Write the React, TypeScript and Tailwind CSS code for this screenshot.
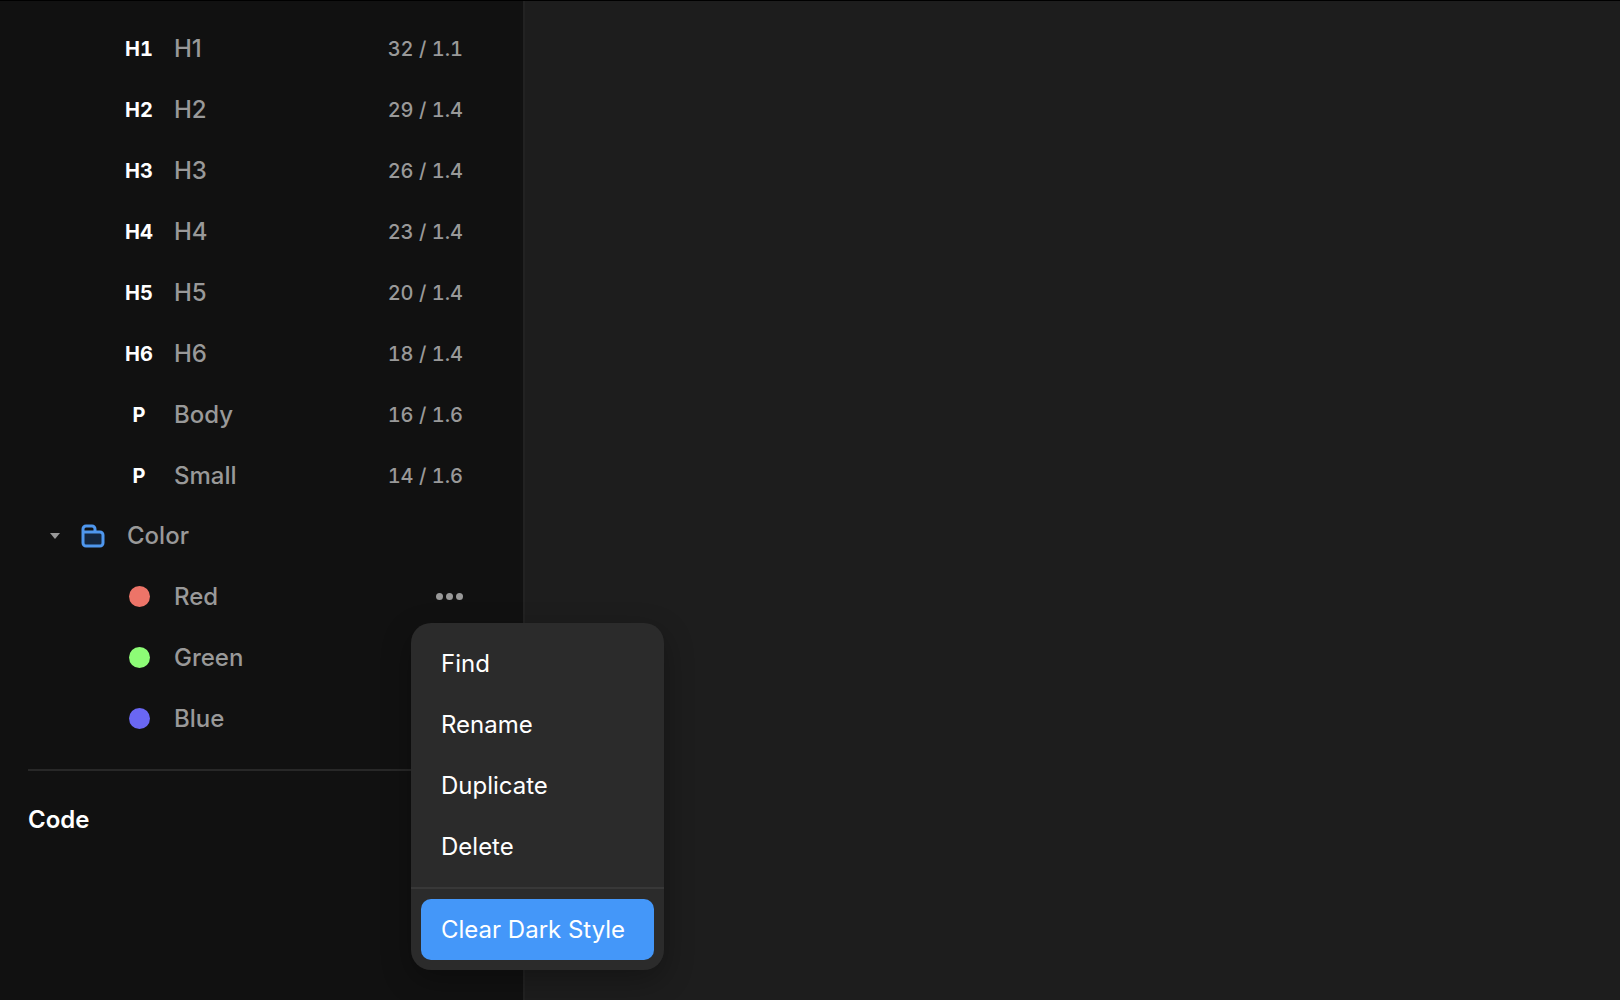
const styles = [
  { tag: 'H1', name: 'H1', size: '32 / 1.1' },
  { tag: 'H2', name: 'H2', size: '29 / 1.4' },
  { tag: 'H3', name: 'H3', size: '26 / 1.4' },
  { tag: 'H4', name: 'H4', size: '23 / 1.4' },
  { tag: 'H5', name: 'H5', size: '20 / 1.4' },
  { tag: 'H6', name: 'H6', size: '18 / 1.4' },
  { tag: 'P', name: 'Body', size: '16 / 1.6' },
  { tag: 'P', name: 'Small', size: '14 / 1.6' },
]

const colors = [
  { name: 'Red', dot: 'bg-[#ed7468]' },
  { name: 'Green', dot: 'bg-[#8dfc76]' },
  { name: 'Blue', dot: 'bg-[#6a67f3]' },
]

const actions = ['Find', 'Rename', 'Duplicate', 'Delete']

function FolderIcon() {
  return (
    <svg width="24" height="24" viewBox="0 0 24 24" fill="none" stroke="#4f97ee" strokeWidth="3" aria-hidden="true">
      <path d="M2 8H19a3 3 0 0 1 3 3v8a3 3 0 0 1-3 3H5a3 3 0 0 1-3-3z" fill="#14263e" stroke="none" />
      <path d="M2 8V5a3 3 0 0 1 3-3h6a3 3 0 0 1 3 3v3M2 8h17a3 3 0 0 1 3 3v8a3 3 0 0 1-3 3H5a3 3 0 0 1-3-3V8" />
    </svg>
  )
}

function ContextMenu() {
  return (
    <div role="menu" className="absolute top-full right-[-141px] z-10 -mt-1 w-[253px] overflow-hidden rounded-[20px] bg-[#2b2b2b] text-white shadow-[0_10px_30px_rgba(0,0,0,0.3)]">
      <div className="p-[10px]">
        {actions.map(a => (
          <button key={a} role="menuitem" className="block h-[61px] w-full rounded-[10px] px-5 text-left">{a}</button>
        ))}
      </div>
      <div className="border-t-2 border-[#383838] p-[10px]">
        <button role="menuitem" className="block h-[61px] w-full rounded-[10px] bg-[#4497f9] px-5 text-left whitespace-nowrap">Clear Dark Style</button>
      </div>
    </div>
  )
}

export default function App() {
  return (
    <div className="flex h-screen overflow-hidden border-t border-black bg-[#1d1d1d] font-['Inter',sans-serif] text-2xl text-[#999999]">
      <aside className="w-[525px] shrink-0 border-r-2 border-[#222222] bg-[#111111] pt-[17px]">
        <ul className="font-medium">
          {styles.map(s => (
            <li key={s.name} className="flex h-[61px] items-center pr-[60px] pl-[119px]">
              <span className="w-10 text-center text-xl font-bold text-white tabular-nums">{s.tag}</span>
              <span className="ml-[15px] flex-1">{s.name}</span>
              <span className="text-xl tabular-nums">{s.size}</span>
            </li>
          ))}
        </ul>
        <button className="flex h-[60px] w-full items-center pl-[50px] font-medium">
          <svg width="10" height="6" viewBox="0 0 10 6" fill="#999999" aria-hidden="true"><path d="M0 0h10L5 6z" /></svg>
          <span className="ml-[21px]"><FolderIcon /></span>
          <span className="ml-[22px]">Color</span>
        </button>
        <ul>
          {colors.map(c => (
            <li key={c.name} className="relative flex h-[61px] items-center pr-[60px] pl-[129px]">
              <span className={`size-[21px] rounded-full ${c.dot}`} />
              <span className="ml-6 flex-1 font-medium">{c.name}</span>
              {c.name === 'Red' && (
                <>
                  <button aria-label="More" className="flex gap-[3px]">
                    <i className="size-[7px] rounded-full bg-[#999999]" />
                    <i className="size-[7px] rounded-full bg-[#999999]" />
                    <i className="size-[7px] rounded-full bg-[#999999]" />
                  </button>
                  <ContextMenu />
                </>
              )}
            </li>
          ))}
        </ul>
        <section className="mx-7 mt-5 border-t-2 border-[#282828] pt-[33px]">
          <h2 className="font-semibold text-white">Code</h2>
        </section>
      </aside>
      <main className="flex-1" />
    </div>
  )
}
